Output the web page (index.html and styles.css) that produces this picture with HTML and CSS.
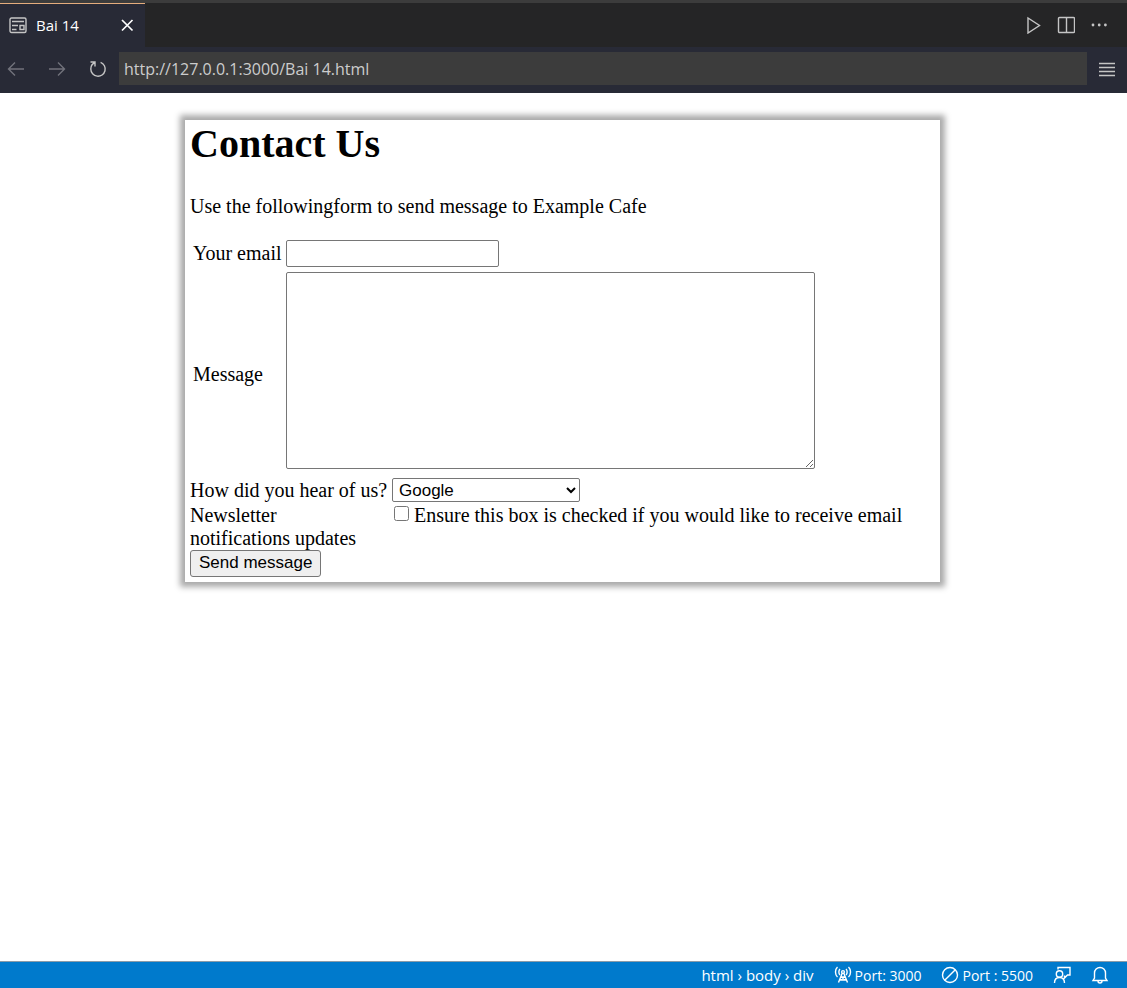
FILE: index.html
```html
<!DOCTYPE html>
<html lang="en">
<head>
<meta charset="utf-8">
<title>Bai 14</title>
<link rel="stylesheet" href="styles.css">
</head>
<body>
<header class="chrome">
  <div class="tabbar">
    <div class="tab">
      <svg class="icon" viewBox="0 0 18 18"><rect x="1" y="1" width="16" height="14.500" rx="1.500"/><path d="M3 4.500h12M3 8.500h6M3 12.500h4.500M11 8.500h4v4h-4z"/></svg>
      <span class="tab-title">Bai 14</span>
      <button class="icon-btn close" type="button" aria-label="Close tab"><svg class="icon bright" viewBox="0 0 18 18"><path d="M4 3l10.500 10.500M14.500 3L4 13.500"/></svg></button>
    </div>
    <div class="actions">
      <button class="icon-btn" type="button" aria-label="Run"><svg class="icon" viewBox="0 0 18 18"><path d="M4 2v15l11.500-7.500z"/></svg></button>
      <button class="icon-btn" type="button" aria-label="Split editor"><svg class="icon" viewBox="0 0 18 18"><rect x="1.500" y="1.500" width="16" height="15" rx="1"/><path d="M9.500 1.500v15"/></svg></button>
      <button class="icon-btn" type="button" aria-label="More"><svg class="icon solid" viewBox="0 0 18 18"><circle cx="3" cy="9" r="1.400"/><circle cx="9.200" cy="9" r="1.400"/><circle cx="15.400" cy="9" r="1.400"/></svg></button>
    </div>
  </div>
  <div class="toolbar">
    <div class="nav">
      <button class="icon-btn dim" type="button" aria-label="Back"><svg class="icon" viewBox="0 0 18 18"><path d="M17 9H1.500M8 2.500L1.500 9 8 15.500"/></svg></button>
      <button class="icon-btn dim" type="button" aria-label="Forward"><svg class="icon" viewBox="0 0 18 18"><path d="M1 9h15.500M10 2.500L16.500 9 10 15.500"/></svg></button>
      <button class="icon-btn" type="button" aria-label="Reload"><svg class="icon" viewBox="0 0 18 18"><path d="M1.500 2H6v4.500M6 2.500C3.500 3.500 1.800 6 1.800 9a7.200 7.200 0 1 0 9.800-6.700"/></svg></button>
    </div>
    <input class="url" type="text" aria-label="Address" value="http://127.0.0.1:3000/Bai 14.html">
    <button class="icon-btn menu" type="button" aria-label="Menu"><svg class="icon" viewBox="0 0 18 18"><path d="M1 3.500h16M1 7.500h16M1 11.500h16M1 15.500h16"/></svg></button>
  </div>
</header>
<main class="page">
  <form class="card">
    <h1>Contact Us</h1>
    <p>Use the followingform to send message to Example Cafe</p>
    <div class="fields">
      <label for="email">Your email</label>
      <input class="box email" id="email" type="email">
      <label class="message-label" for="message">Message</label>
      <textarea class="box message" id="message"></textarea>
    </div>
    <div class="row source">
      <label for="source">How did you hear of us?</label>
      <select class="box" id="source"><option>Google</option></select>
    </div>
    <div class="row">
      <span class="row-label">Newsletter notifications updates</span>
      <div class="check"><input id="news" type="checkbox"><label for="news">Ensure this box is checked if you would like to receive email</label></div>
    </div>
    <button class="send" type="button">Send message</button>
  </form>
</main>
<footer class="status">
  <span class="path">html › body › div</span>
  <span class="item"><svg class="icon" viewBox="0 0 18 18"><path d="M3.500 1C.8 3.500.8 8.500 3.500 11M14.500 1c2.700 2.500 2.700 7.500 0 10M6 3C4.500 4.500 4.500 7.500 6 9M12 3c1.500 1.500 1.500 4.500 0 6M8.300 7L4.500 16.500M9.700 7l3.800 9.500M7 11h4M6 14h6M6 14l5-3M12 14l-5-3"/><circle cx="9" cy="6" r="1.400"/></svg>Port: 3000</span>
  <span class="item"><svg class="icon" viewBox="0 0 18 18"><circle cx="9" cy="9" r="7.500"/><path d="M3.700 14.300L14.300 3.700"/></svg>Port : 5500</span>
  <svg class="icon" viewBox="0 0 18 18"><path d="M5 3.500V1.500h12V9h-2.500L11.500 12V9.500M1.500 17c0-3.500 2-5.500 5-5.500s5 2 5 5.500"/><circle cx="6.500" cy="8" r="3.200"/></svg>
  <svg class="icon" viewBox="0 0 18 18"><path d="M2 14.500h14L14.500 12V7a5.500 5.500 0 0 0-11 0v5zM7 15a2 2 0 0 0 4 0"/></svg>
</footer>
</body>
</html>
```
FILE: styles.css
```css
* { box-sizing: border-box; }
body {
  margin: 0;
  min-height: 100vh;
  display: flex;
  flex-direction: column;
  background: #fff;
  color: #000;
  font: 20px/23px "Liberation Serif", "Times New Roman", serif;
}
.chrome, .status { font-family: "Open Sans", "Noto Sans", sans-serif; }
.icon {
  width: 18px;
  height: 18px;
  flex: none;
  display: block;
  fill: none;
  stroke: currentColor;
  stroke-width: 1.4;
}
.solid { fill: currentColor; stroke: none; }
.bright { color: #fff; stroke-width: 1.7; }
.icon-btn { padding: 0; border: 0; background: none; color: #c5c5c5; }
.dim { color: #71727b; }

.tabbar {
  height: 47px;
  display: flex;
  justify-content: space-between;
  border-top: 3px solid #3c3c3c;
  background: #252526;
}
.tab {
  width: 145px;
  display: flex;
  align-items: center;
  gap: 9px;
  padding: 0 9px;
  border-top: 1px solid #e5ad7d;
  background: #282a36;
  color: #c5c5c5;
}
.tab-title { color: #fff; font-size: 15px; }
.close { margin-left: auto; }
.actions { display: flex; align-items: center; gap: 15px; padding-right: 19px; }
.toolbar {
  height: 46px;
  display: flex;
  align-items: center;
  padding-bottom: 3px;
  background: #282a36;
}
.nav { width: 119px; display: flex; gap: 23px; padding-left: 7px; }
.url {
  flex: 1;
  min-width: 0;
  height: 33px;
  padding: 0 5px;
  border: 0;
  background: #3c3c3c;
  color: #ccc;
  font: 16px "Open Sans", "Noto Sans", sans-serif;
}
.menu { width: 40px; display: flex; justify-content: center; }

.page { flex: 1; padding: 27px 2px 27px 0; }
.card {
  width: 755px;
  max-width: 94%;
  margin: 0 auto;
  padding: 0 5px 5px;
  background: #fff;
  box-shadow: 0 0 6px 5px #aaa;
}
h1 { margin: 0; font-size: 40px; line-height: 48px; }
p { margin: 27px 0 22px; }
.fields {
  display: grid;
  grid-template-columns: 93px 1fr;
  row-gap: 5px;
  align-items: center;
  padding-left: 3px;
}
.message-label { padding-top: 7px; }
.box {
  border: 1px solid #767676;
  border-radius: 2px;
  background: #fff;
  color: #000;
  font: 17px "Liberation Sans", Arial, sans-serif;
}
.email { width: 213px; height: 27px; }
.message { width: 529px; max-width: 100%; height: 197px; }
.row { display: grid; grid-template-columns: 202px 1fr; }
.row-label { padding-right: 20px; }
.source { margin: 9px 0 2px; align-items: center; }
.source select { width: 188px; height: 24px; padding: 0 2px; }
.check { display: flex; align-items: flex-start; gap: 5px; padding-left: 2px; }
.check input { flex: none; width: 15px; height: 15px; margin: 2px 0 0; }
.send {
  display: block;
  height: 27px;
  padding: 0 8px 2px;
  border: 1px solid #767676;
  border-radius: 3px;
  background: #efefef;
  color: #000;
  font: 17px "Liberation Sans", Arial, sans-serif;
}

.status {
  height: 27px;
  display: flex;
  align-items: center;
  justify-content: flex-end;
  gap: 20px;
  padding-right: 18px;
  border-top: 1px solid #8a9ba8;
  background: #007acc;
  color: #fff;
  font-size: 14px;
}
.path { font-size: 15px; }
.item { display: flex; align-items: center; gap: 3px; }
```
